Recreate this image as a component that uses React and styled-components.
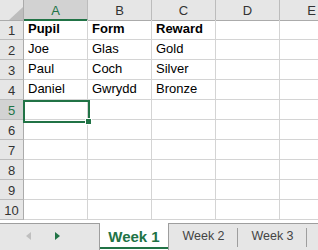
import React from "react";
import styled, { createGlobalStyle } from "styled-components";

const GlobalStyle = createGlobalStyle`
  html, body {
    margin: 0;
    padding: 0;
    background: #ffffff;
  }
  body {
    font-family: "Liberation Sans", Arial, sans-serif;
  }
`;

const GREEN = "#217346";
const COLS = ["A", "B", "C", "D", "E"];
const DATA = [
  ["Pupil", "Form", "Reward"],
  ["Joe", "Glas", "Gold"],
  ["Paul", "Coch", "Silver"],
  ["Daniel", "Gwrydd", "Bronze"],
];
const ROW_COUNT = 10;

const Window = styled.div`
  width: 318px;
  height: 250px;
  overflow: hidden;
  display: flex;
  flex-direction: column;
  background: #fff;
`;

const Sheet = styled.div`
  position: relative;
  height: 223px;
  overflow: hidden;
  flex-shrink: 0;
`;

const Grid = styled.div`
  display: grid;
  grid-template-columns: 24px repeat(5, 64px);
  grid-auto-rows: 20px;
  width: 344px;
  & > :nth-child(-n + 6) {
    height: 21px;
  }
`;

const Corner = styled.div`
  position: relative;
  background: #e6e6e6;
  border-right: 1px solid #ababab;
  border-bottom: 1px solid #ababab;
  box-sizing: border-box;
  height: 21px;
`;

const Triangle = styled.svg`
  position: absolute;
  left: 9px;
  top: 7px;
`;

const ColHeader = styled.div`
  box-sizing: border-box;
  height: 21px;
  background: ${(p) => (p.$active ? "#d2d2d2" : "#e6e6e6")};
  border-right: 1px solid #bcbcbc;
  border-bottom: ${(p) => (p.$active ? `2px solid ${GREEN}` : "1px solid #ababab")};
  color: ${(p) => (p.$active ? GREEN : "#333")};
  font-size: 13px;
  display: flex;
  align-items: center;
  justify-content: center;
  padding-top: ${(p) => (p.$active ? "1px" : "0")};
`;

const RowHeader = styled.div`
  box-sizing: border-box;
  background: ${(p) => (p.$active ? "#d2d2d2" : "#e6e6e6")};
  border-right: 1px solid #ababab;
  border-bottom: 1px solid #bcbcbc;
  color: ${(p) => (p.$active ? GREEN : "#333")};
  font-size: 13px;
  display: flex;
  align-items: center;
  justify-content: center;
  padding-top: 1px;
`;

const Cell = styled.div`
  box-sizing: border-box;
  border-right: 1px solid #d4d4d4;
  border-bottom: 1px solid #d4d4d4;
  font-size: 13px;
  font-weight: ${(p) => (p.$bold ? 700 : 400)};
  color: #000;
  padding: 0 3px 3px 4px;
  display: flex;
  align-items: flex-end;
  white-space: nowrap;
  overflow: hidden;
`;

const Selection = styled.div`
  position: absolute;
  left: 23px;
  top: 100px;
  width: 67px;
  height: 23px;
  box-sizing: border-box;
  border: 2px solid ${GREEN};
  pointer-events: none;
`;

const FillHandle = styled.div`
  position: absolute;
  left: 86px;
  top: 119px;
  width: 5px;
  height: 5px;
  background: ${GREEN};
  outline: 1px solid #fff;
`;

const TabBar = styled.div`
  display: flex;
  height: 27px;
  background: #e6e6e6;
`;

const Nav = styled.div`
  width: 99px;
  box-sizing: border-box;
  border-top: 1px solid #9e9e9e;
  display: flex;
  align-items: center;
  padding-left: 26px;
  padding-bottom: 2px;
`;

const NavArrow = styled.svg`
  width: 5px;
  height: 8px;
  margin-right: ${(p) => p.$gap || 0}px;
`;

const ActiveTab = styled.div`
  width: 70px;
  box-sizing: border-box;
  background: #fff;
  border-left: 1px solid #9e9e9e;
  border-right: 1px solid #9e9e9e;
  display: flex;
  flex-direction: column;
  align-items: center;
`;

const ActiveLabel = styled.span`
  flex: 1;
  display: flex;
  align-items: center;
  padding-top: 2px;
  font-size: 15px;
  font-weight: 700;
  color: ${GREEN};
`;

const Underline = styled.div`
  align-self: stretch;
  height: 2px;
  margin-bottom: 1px;
  background: ${GREEN};
`;

const Tab = styled.div`
  width: 69px;
  box-sizing: border-box;
  border-top: 1px solid #9e9e9e;
  display: flex;
  align-items: center;
  justify-content: center;
  position: relative;
  font-size: 12.5px;
  color: #444;
  padding-bottom: 2px;
  &::after {
    content: "";
    position: absolute;
    right: 0;
    top: 4px;
    bottom: 3px;
    width: 1px;
    background: #9e9e9e;
  }
`;

const Filler = styled.div`
  flex: 1;
  border-top: 1px solid #9e9e9e;
`;

export default function App() {
  const rows = Array.from({ length: ROW_COUNT }, (_, i) => i + 1);
  return (
    <Window>
      <GlobalStyle />
      <Sheet>
        <Grid>
          <Corner>
            <Triangle width="14" height="13" viewBox="0 0 14 13">
              <polygon points="14,0 14,13 0,13" fill="#bdbdbd" />
            </Triangle>
          </Corner>
          {COLS.map((c) => (
            <ColHeader key={c} $active={c === "A"}>
              {c}
            </ColHeader>
          ))}
          {rows.map((r) => (
            <React.Fragment key={r}>
              <RowHeader $active={r === 5}>{r}</RowHeader>
              {COLS.map((c, ci) => {
                const v = DATA[r - 1] ? DATA[r - 1][ci] : "";
                return (
                  <Cell key={c} $bold={r === 1}>
                    {v}
                  </Cell>
                );
              })}
            </React.Fragment>
          ))}
        </Grid>
        <Selection />
        <FillHandle />
      </Sheet>
      <TabBar>
        <Nav>
          <NavArrow viewBox="0 0 5 8" $gap={24}>
            <polygon points="5,0 5,8 0,4" fill="#bfbfbf" />
          </NavArrow>
          <NavArrow viewBox="0 0 5 8">
            <polygon points="0,0 0,8 5,4" fill={GREEN} />
          </NavArrow>
        </Nav>
        <ActiveTab>
          <ActiveLabel>Week 1</ActiveLabel>
          <Underline />
        </ActiveTab>
        <Tab>Week 2</Tab>
        <Tab>Week 3</Tab>
        <Filler />
      </TabBar>
    </Window>
  );
}
